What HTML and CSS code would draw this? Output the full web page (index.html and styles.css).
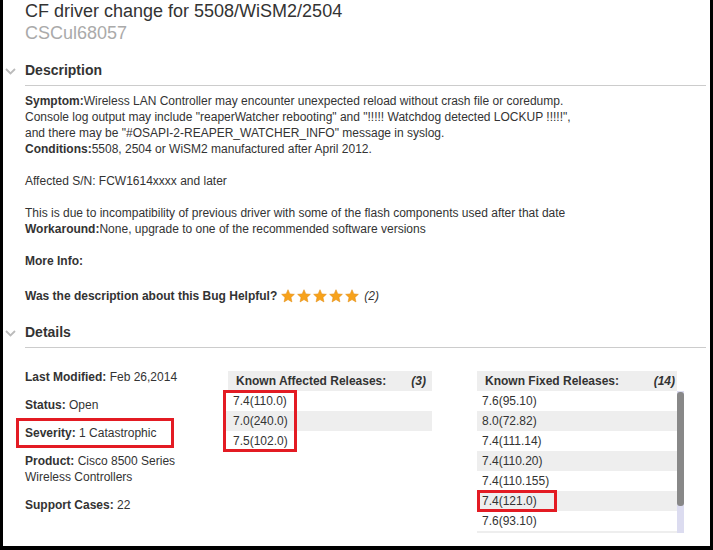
FILE: index.html
```html
<!DOCTYPE html>
<html>
<head>
<meta charset="utf-8">
<link rel="stylesheet" href="styles.css">
</head>
<body>
<div class="frame">
  <div class="page">
    <h1 class="title">CF driver change for 5508/WiSM2/2504</h1>
    <div class="bugid">CSCul68057</div>

    <div class="section-head">
      <span class="chev"><svg width="11" height="7" viewBox="0 0 11 7"><path d="M1 1 L5.5 5.5 L10 1" fill="none" stroke="#bbb" stroke-width="1.8"/></svg></span>
      <h2>Description</h2>
    </div>
    <div class="desc">
      <p><b>Symptom:</b>Wireless LAN Controller may encounter unexpected reload without crash file or coredump.<br>
      Console log output may include "reaperWatcher rebooting" and "!!!!! Watchdog detected LOCKUP !!!!!",<br>
      and there may be "#OSAPI-2-REAPER_WATCHER_INFO" message in syslog.<br>
      <b>Conditions:</b>5508, 2504 or WiSM2 manufactured after April 2012.</p>
      <p>Affected S/N: FCW1614xxxx and later</p>
      <p>This is due to incompatibility of previous driver with some of the flash components used after that date<br>
      <b>Workaround:</b>None, upgrade to one of the recommended software versions</p>
      <p><b>More Info:</b></p>
      <p class="helpful"><b>Was the description about this Bug Helpful?</b>
        <span class="stars">
          <svg class="star" viewBox="0 0 16 16"><path d="M8 0.8 L10.1 5.6 L15.3 6.1 L11.4 9.6 L12.5 14.8 L8 12.1 L3.5 14.8 L4.6 9.6 L0.7 6.1 L5.9 5.6 Z" fill="#f7a21b" stroke="#e08a10" stroke-width="0.6"/></svg>
          <svg class="star" viewBox="0 0 16 16"><path d="M8 0.8 L10.1 5.6 L15.3 6.1 L11.4 9.6 L12.5 14.8 L8 12.1 L3.5 14.8 L4.6 9.6 L0.7 6.1 L5.9 5.6 Z" fill="#f7a21b" stroke="#e08a10" stroke-width="0.6"/></svg>
          <svg class="star" viewBox="0 0 16 16"><path d="M8 0.8 L10.1 5.6 L15.3 6.1 L11.4 9.6 L12.5 14.8 L8 12.1 L3.5 14.8 L4.6 9.6 L0.7 6.1 L5.9 5.6 Z" fill="#f7a21b" stroke="#e08a10" stroke-width="0.6"/></svg>
          <svg class="star" viewBox="0 0 16 16"><path d="M8 0.8 L10.1 5.6 L15.3 6.1 L11.4 9.6 L12.5 14.8 L8 12.1 L3.5 14.8 L4.6 9.6 L0.7 6.1 L5.9 5.6 Z" fill="#f7a21b" stroke="#e08a10" stroke-width="0.6"/></svg>
          <svg class="star" viewBox="0 0 16 16"><path d="M8 0.8 L10.1 5.6 L15.3 6.1 L11.4 9.6 L12.5 14.8 L8 12.1 L3.5 14.8 L4.6 9.6 L0.7 6.1 L5.9 5.6 Z" fill="#f7a21b" stroke="#e08a10" stroke-width="0.6"/></svg>
        </span>
        <i class="count">(2)</i>
      </p>
    </div>

    <div class="section-head">
      <span class="chev"><svg width="11" height="7" viewBox="0 0 11 7"><path d="M1 1 L5.5 5.5 L10 1" fill="none" stroke="#bbb" stroke-width="1.8"/></svg></span>
      <h2>Details</h2>
    </div>
    <div class="details">
      <div class="meta">
        <div class="item"><b>Last Modified:</b> Feb 26,2014</div>
        <div class="item"><b>Status:</b> Open</div>
        <div class="item boxed"><b>Severity:</b> 1 Catastrophic</div>
        <div class="item"><b>Product:</b> Cisco 8500 Series<br>Wireless Controllers</div>
        <div class="item"><b>Support Cases:</b> 22</div>
      </div>
      <div class="rel affected">
        <div class="rel-head"><b>Known Affected Releases:</b><b><i>(3)</i></b></div>
        <div class="rel-body">
          <div class="mark">
            <div class="row">7.4(110.0)</div>
            <div class="row alt">7.0(240.0)</div>
            <div class="row">7.5(102.0)</div>
          </div>
        </div>
      </div>
      <div class="rel fixed">
        <div class="rel-head"><b>Known Fixed Releases:</b><b><i>(14)</i></b></div>
        <div class="scroll">
          <div class="list">
            <div class="row">7.6(95.10)</div>
            <div class="row alt">8.0(72.82)</div>
            <div class="row">7.4(111.14)</div>
            <div class="row alt">7.4(110.20)</div>
            <div class="row">7.4(110.155)</div>
            <div class="row alt"><span class="mark-inline">7.4(121.0)</span></div>
            <div class="row">7.6(93.10)</div>
            <div class="row alt"></div>
          </div>
          <div class="bar"><div class="thumb"></div></div>
        </div>
      </div>
    </div>
  </div>
</div>
</body>
</html>
```

FILE: styles.css
```css
* { box-sizing: border-box; }
html, body { margin: 0; padding: 0; background: #000; }
body {
  font-family: "Liberation Sans", Arial, sans-serif;
  color: #333;
  width: 713px;
  height: 550px;
  overflow: hidden;
}
.frame {
  width: 713px;
  height: 550px;
  border-left: 3px solid #000;
  border-right: 3px solid #000;
  border-bottom: 4px solid #000;
  background: #fff;
  overflow: hidden;
}
.page {
  padding: 0 4px 0 22px;
  margin-top: 0;
}
.title {
  font-size: 18px;
  font-weight: normal;
  line-height: 22px;
  margin: 0;
  color: #333;
}
.bugid {
  font-size: 18px;
  line-height: 22px;
  color: #aaa;
  margin-bottom: 16px;
}
.section-head {
  position: relative;
  border-bottom: 1px solid #ccc;
  height: 26px;
}
.chev {
  position: absolute;
  left: -20px;
  top: 8px;
  line-height: 0;
}
.section-head h2 {
  margin: 0;
  font-size: 14px;
  font-weight: bold;
  line-height: 20px;
  color: #333;
}
.desc {
  font-size: 12px;
  line-height: 16px;
  padding-top: 7px;
}
.desc p { margin: 0 0 16px 0; }
.helpful { display: flex; align-items: center; margin-top: 19px !important; margin-bottom: 18px !important; }
.stars { display: inline-flex; gap: 2px; margin-left: 4px; }
.star { width: 14px; height: 14px; display: block; }
.count { margin-left: 5px; }
.details {
  display: flex;
  padding-top: 21px;
  font-size: 12px;
}
.meta { width: 203px; flex-shrink: 0; }
.item { line-height: 16px; margin-bottom: 12px; }
.item.boxed {
  outline: 3px solid #e31b23;
  outline-offset: 0;
  margin-left: -6px;
  padding-left: 6px;
  width: 152px;
  padding-top: 4px;
  padding-bottom: 4px;
  margin-top: -4px;
  margin-bottom: 8px;
}
.rel { flex-shrink: 0; }
.rel-head {
  display: flex;
  justify-content: space-between;
  background: #eee;
  height: 20px;
  line-height: 20px;
  padding: 0 6px 0 8px;
}
.affected { width: 204px; margin-top: 2px; }
.fixed { width: 207px; margin-left: 45px; margin-top: 2px; }
.fixed .rel-head { width: 200px; padding-right: 2px; }
.row { height: 20px; line-height: 20px; padding-left: 5px; }
.row.alt { background: #eee; }
.mark {
  outline: 3px solid #e31b23;
  outline-offset: -2px;
  width: 72px;
  margin-left: -4px;
}
.mark .row { padding-left: 9px; width: 204px; }
.mark .row.alt { width: 208px; margin-left: 0; }
.scroll { display: flex; height: 142px; overflow: hidden; }
.list { width: 200px; }
.mark-inline {
  display: inline-block;
  outline: 3px solid #e31b23;
  outline-offset: -1px;
  margin-left: -3px;
  padding: 0 18px 0 3px;
  line-height: 18px;
}
.bar { width: 7px; background: #dcdcf0; }
.thumb { height: 114px; background: #888; border-radius: 3px; margin-top: 1px; }
```
